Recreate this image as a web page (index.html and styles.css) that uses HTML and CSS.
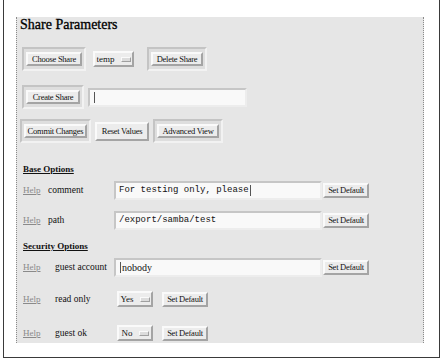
FILE: index.html
```html
<!DOCTYPE html>
<html lang="en">
<head>
    <meta charset="UTF-8">
    <title>SWAT - Share Parameters</title>
    <link rel="stylesheet" href="styles.css">
</head>
<body>
    <div class="frame">
        <div class="panel">
            <h2 class="title">Share Parameters</h2>

            <div class="row row-choose">
                <span class="ring w64"><button class="btn">Choose Share</button></span>
                <span class="menu w41">temp <i class="ind"></i></span>
                <span class="ring w60 ml6"><button class="btn">Delete Share</button></span>
            </div>

            <div class="row row-create">
                <span class="ring w62"><button class="btn">Create Share</button></span>
                <div class="field w159"><i class="caret"></i></div>
            </div>

            <div class="row row-commit">
                <span class="ring w71"><button class="btn">Commit Changes</button></span>
                <button class="btn plain w54">Reset Values</button>
                <span class="ring w70"><button class="btn">Advanced View</button></span>
            </div>

            <h3 class="section base">Base Options</h3>
            <div class="opt opt-base first">
                <a class="help" href="#">Help</a>
                <span class="label">comment</span>
                <div class="field mono">For testing only, please<i class="caret"></i></div>
                <button class="btn setdef">Set Default</button>
            </div>
            <div class="opt opt-base">
                <a class="help" href="#">Help</a>
                <span class="label">path</span>
                <div class="field mono">/export/samba/test</div>
                <button class="btn setdef">Set Default</button>
            </div>

            <h3 class="section security">Security Options</h3>
            <div class="opt opt-sec first">
                <a class="help" href="#">Help</a>
                <span class="label">guest account</span>
                <div class="field"><i class="caret"></i>nobody</div>
                <button class="btn setdef">Set Default</button>
            </div>
            <div class="opt opt-sec sel">
                <a class="help" href="#">Help</a>
                <span class="label">read only</span>
                <span class="menu w36">Yes <i class="ind"></i></span>
                <button class="btn setdef">Set Default</button>
            </div>
            <div class="opt opt-sec sel last">
                <a class="help" href="#">Help</a>
                <span class="label">guest ok</span>
                <span class="menu w36">No <i class="ind"></i></span>
                <button class="btn setdef">Set Default</button>
            </div>
        </div>
    </div>
</body>
</html>
```

FILE: styles.css
```css
body {
    margin: 0;
    padding: 0;
    background-color: #ffffff;
    font-family: "Liberation Serif", "Times New Roman", serif;
    color: #111;
}
.frame {
    box-sizing: border-box;
    margin-left: 3px;
    width: 437px;
    height: 358px;
    padding-top: 17px;
    border-left: 1px solid #3a3a3a;
    border-right: 1px solid #3a3a3a;
    border-bottom: 1px solid #3a3a3a;
}
.panel {
    margin-left: 12px;
    width: 408px;
    height: 326px;
    box-sizing: border-box;
    background-color: #e6e6e6;
    border-left: 1px dotted #8a8a8a;
    border-right: 1px dotted #8a8a8a;
    padding-left: 3px;
    overflow: hidden;
}
.title {
    margin: 0;
    font-size: 14px;
    font-weight: normal;
    line-height: 16px;
    color: #000;
    -webkit-text-stroke: 0.3px #000;
}

/* button rows */
.row {
    display: flex;
    align-items: center;
    height: 24px;
}
.row-choose {
    margin-top: 14px;
    margin-left: 2px;
    gap: 7px;
}
.row-create {
    margin-top: 14px;
    margin-left: 2px;
    gap: 4px;
}
.row-commit {
    margin-top: 10px;
    gap: 4px;
}
.ml6 {
    margin-left: 6px;
}
.ring {
    display: inline-flex;
    box-sizing: border-box;
    height: 24px;
    padding: 3px 2px;
    border: 2px solid;
    border-color: #c4c4c4 #f2f2f2 #f2f2f2 #c4c4c4;
    background-color: #dedede;
}
.ring .btn {
    width: 100%;
    height: 100%;
}
.btn {
    box-sizing: border-box;
    margin: 0;
    padding: 0;
    font-family: "Liberation Serif", "Times New Roman", serif;
    font-size: 8.5px;
    line-height: 10px;
    color: #111;
    background-color: #ececec;
    border: 2px solid;
    border-color: #fafafa #a4a4a4 #a4a4a4 #fafafa;
    white-space: nowrap;
    letter-spacing: -0.25px;
}
.plain {
    height: 19px;
}
.menu {
    display: inline-flex;
    align-items: center;
    justify-content: center;
    gap: 6px;
    box-sizing: border-box;
    height: 16px;
    font-size: 9px;
    background-color: #ececec;
    border: 2px solid;
    border-color: #fafafa #a4a4a4 #a4a4a4 #fafafa;
}
.ind {
    display: inline-block;
    width: 10px;
    height: 5px;
    box-sizing: border-box;
    border: 1px solid;
    border-color: #fafafa #a0a0a0 #a0a0a0 #fafafa;
    background-color: #dcdcdc;
}
.w64 { width: 64px; }
.w41 { width: 41px; }
.w60 { width: 60px; }
.w62 { width: 62px; }
.w71 { width: 71px; }
.w54 { width: 54px; }
.w70 { width: 70px; }
.w36 { width: 36px; }
.w159 { width: 159px; }

.field {
    display: flex;
    align-items: center;
    box-sizing: border-box;
    height: 19px;
    padding-left: 3px;
    background-color: #f9f9f9;
    border: 2px solid;
    border-color: #c6c6c6 #ededed #ededed #c6c6c6;
    font-size: 10px;
    color: #111;
    white-space: nowrap;
    overflow: hidden;
}
.field.mono {
    font-family: "Liberation Mono", "Courier New", monospace;
    font-size: 9px;
}
.caret {
    display: inline-block;
    width: 1px;
    height: 11px;
    margin: 0 1px;
    background-color: #555;
}

/* option sections */
.section {
    margin: 0 0 0 3px;
    font-size: 9px;
    line-height: 12px;
    font-weight: bold;
    text-decoration: underline;
    color: #111;
}
.section.base {
    margin-top: 20px;
}
.section.security {
    margin-top: 10px;
}
.opt {
    display: grid;
    align-items: center;
    height: 20px;
    margin-left: 3px;
    margin-top: 10px;
}
.opt.first {
    margin-top: 5px;
}
.opt.sel {
    margin-top: 12px;
}
.opt.last {
    margin-top: 14px;
}
.opt-base {
    grid-template-columns: 25px 66px 208px 47px;
}
.opt-sec {
    grid-template-columns: 32px 59px 208px 47px;
}
.opt-sec.sel {
    grid-template-columns: 32px 62px 36px 55px;
}
.help {
    font-size: 9px;
    color: #8a8a8a;
    text-decoration: underline;
}
.label {
    font-size: 9.5px;
    color: #111;
    white-space: nowrap;
}
.setdef {
    justify-self: end;
    height: 15px;
    width: 46px;
}
```
